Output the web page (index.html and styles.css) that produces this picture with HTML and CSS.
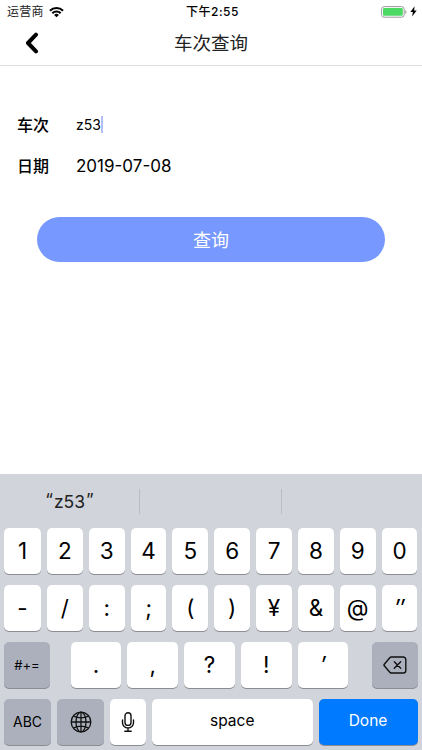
FILE: index.html
```html
<!DOCTYPE html>
<html lang="zh-CN">
<head>
    <meta charset="UTF-8">
    <meta name="viewport" content="width=device-width, initial-scale=1.0">
    <title>车次查询</title>
    <link rel="stylesheet" href="styles.css">
</head>
<body>
    <div class="status-bar">
        <div class="carrier">
            <span>运营商</span>
            <svg class="wifi" viewBox="0 0 14 11" width="15" height="12">
                <path d="M.9 4.3a8.6 8.6 0 0 1 12.2 0M3.1 6.6a5.4 5.4 0 0 1 7.8 0" fill="none" stroke="#000" stroke-width="1.9"/>
                <path d="M4.8 8.3a3 3 0 0 1 4.4 0L7 10.5z"/>
            </svg>
        </div>
        <span class="time">下午2:55</span>
        <div class="power">
            <svg viewBox="0 0 26 12" width="26" height="12">
                <rect x=".6" y=".6" width="22.6" height="10.6" rx="2.6" fill="#fff" stroke="#999" stroke-width="1"/>
                <rect x="2" y="2" width="19.8" height="7.8" rx="1.2" fill="#4cd964"/>
                <path d="M24.3 4v4c1.6-.6 1.6-3.4 0-4z" fill="#999"/>
            </svg>
            <svg class="bolt" viewBox="0 0 7 11" width="7" height="11">
                <path d="M4.6.3L.4 6h2.5L2.1 10.5 6.7 4.6H4.1z"/>
            </svg>
        </div>
    </div>

    <header class="nav-bar">
        <svg class="back" viewBox="0 0 14 22" width="14" height="22">
            <path d="M11 2.6L3 11l8 8.4" fill="none" stroke="#000" stroke-width="4" stroke-linecap="round" stroke-linejoin="round"/>
        </svg>
        <h1>车次查询</h1>
    </header>

    <main class="form">
        <div class="field">
            <span class="label">车次</span>
            <span class="value small">z53</span><span class="caret"></span>
        </div>
        <div class="field">
            <span class="label">日期</span>
            <span class="value">2019-07-08</span>
        </div>
        <button class="search">查询</button>
    </main>

    <div class="keyboard">
        <div class="suggestions">
            <span class="typed"><b>“</b>z53<b>”</b></span>
            <span></span>
            <span></span>
        </div>

        <div class="keys">
            <div class="key first">1</div>
            <div class="key">2</div>
            <div class="key">3</div>
            <div class="key">4</div>
            <div class="key">5</div>
            <div class="key">6</div>
            <div class="key">7</div>
            <div class="key">8</div>
            <div class="key">9</div>
            <div class="key">0</div>
        </div>

        <div class="keys">
            <div class="key first">-</div>
            <div class="key">/</div>
            <div class="key">:</div>
            <div class="key">;</div>
            <div class="key">(</div>
            <div class="key">)</div>
            <div class="key">¥</div>
            <div class="key">&amp;</div>
            <div class="key">@</div>
            <div class="key slanted">″</div>
        </div>

        <div class="keys marks">
            <div class="key dark symbols">#+=</div>
            <div class="mark-group">
                <div class="key">.</div>
                <div class="key">,</div>
                <div class="key">?</div>
                <div class="key">!</div>
                <div class="key slanted">′</div>
            </div>
            <div class="key dark delete">
                <svg viewBox="0 0 24 18" width="24" height="18" fill="none" stroke="#111" stroke-width="1.4" stroke-linejoin="round" stroke-linecap="round">
                    <path d="M8.2 1h12a2.6 2.6 0 0 1 2.6 2.6v10.8a2.6 2.6 0 0 1-2.6 2.6h-12q-.8 0-1.4-.7L1.3 9.8q-.7-.8 0-1.6L6.8 1.7q.6-.7 1.4-.7z"/>
                    <path d="M11.3 5.8l6.4 6.4M17.7 5.8l-6.4 6.4"/>
                </svg>
            </div>
        </div>

        <div class="keys bottom">
            <div class="key dark abc">ABC</div>
            <div class="key dark globe">
                <svg viewBox="0 0 22 22" width="22" height="22" fill="none" stroke="#111" stroke-width="1.3">
                    <circle cx="11" cy="11" r="9.8"/>
                    <ellipse cx="11" cy="11" rx="5" ry="9.8"/>
                    <path d="M11 1.3v19.4M1.3 11h19.4M3.5 5.2q7.5 3.4 15 0M3.5 16.8q7.5-3.4 15 0"/>
                </svg>
            </div>
            <div class="key mic">
                <svg viewBox="0 0 14 20" width="14" height="20" fill="none" stroke="#111" stroke-width="1.4" stroke-linecap="round">
                    <rect x="4" y=".8" width="6" height="12.6" rx="3"/>
                    <path d="M1.5 8v2.8a5.5 5.2 0 0 0 11 0V8M7 16v3M3.8 19.2h6.4"/>
                </svg>
            </div>
            <div class="key space">space</div>
            <div class="key done">Done</div>
        </div>
    </div>
</body>
</html>
```
FILE: styles.css
```css
* {
    box-sizing: border-box;
}

body {
    margin: 0;
    height: 750px;
    display: flex;
    flex-direction: column;
    overflow: hidden;
    background: #fff;
    color: #000;
    font-family: Inter, "Noto Sans CJK SC", sans-serif;
}

svg {
    display: block;
}

/* status bar */
.status-bar {
    height: 21px;
    padding: 1px 5px 0 7px;
    display: grid;
    grid-template-columns: 1fr auto 1fr;
    align-items: center;
    font-size: 12px;
    line-height: 20px;
}

.carrier {
    display: flex;
    align-items: center;
    gap: 5px;
    color: #222;
    letter-spacing: 0.3px;
}

.carrier span,
.time {
    padding-top: 1px;
}

.time {
    padding-left: 1px;
    font-weight: 500;
    letter-spacing: 0.5px;
}

.power {
    display: flex;
    align-items: center;
    justify-content: flex-end;
    gap: 3px;
}

/* title bar */
.nav-bar {
    height: 45px;
    padding: 0 25px;
    display: grid;
    grid-template-columns: 1fr auto 1fr;
    align-items: center;
    border-bottom: 1px solid #dcdcdc;
}

.nav-bar h1 {
    margin: 0;
    font-size: 18.5px;
    font-weight: 400;
    line-height: 44px;
    color: #222;
}

/* form */
.form {
    flex: 1;
    padding: 38px 37px 0 17px;
}

.field {
    height: 41px;
    display: flex;
    align-items: center;
}

.label {
    width: 59px;
    padding-bottom: 1px;
    font-size: 16px;
    font-weight: 500;
}

.value {
    font-size: 17px;
}

.value.small {
    font-size: 14px;
}

.caret {
    width: 2px;
    height: 17px;
    background: #b3bff8;
}

.search {
    display: block;
    width: 348px;
    height: 45px;
    margin: 30.5px 0 0 20px;
    padding: 0 0 1px;
    border: none;
    border-radius: 23px;
    background: #7799ff;
    color: #fff;
    font-family: inherit;
    font-size: 18px;
}

/* keyboard */
.keyboard {
    height: 276px;
    padding: 0 4.5px 0 4px;
    background: #d1d4da;
}

.suggestions {
    height: 54px;
    margin: 0 -4.5px 0 -4px;
    display: grid;
    grid-template-columns: 139px 142px 1fr;
    align-items: center;
    font-size: 17.5px;
    text-align: center;
    color: #222;
}

.suggestions span {
    height: 25px;
    line-height: 25px;
}

.suggestions span + span {
    border-left: 1px solid #b9bdc4;
}

.typed b {
    margin: 0 1px;
    font-weight: 400;
    vertical-align: 2px;
    line-height: 1;
}

.keys {
    height: 45.5px;
    margin-bottom: 11.5px;
    display: flex;
    gap: 6px;
}

.key {
    flex: 1;
    display: flex;
    align-items: center;
    justify-content: center;
    border-radius: 5px;
    background: #fff;
    box-shadow: 0 1px 0 #8b8d92;
    font-size: 22.5px;
}

.key.first {
    flex: 0 0 37px;
}

.key.slanted {
    font-style: italic;
}

.key.dark {
    background: #abb0bc;
}

.mark-group {
    width: 278px;
    margin: 0 17px 0 14.5px;
    display: flex;
    gap: 6px;
}

.key.symbols,
.key.delete {
    flex: 0 0 46px;
}

.key.symbols {
    font-size: 13px;
}

.key.abc,
.key.globe {
    flex: 0 0 47px;
}

.key.abc {
    font-size: 14px;
}

.key.mic {
    flex: 0 0 36px;
}

.key.space {
    padding-bottom: 3px;
    font-size: 15.5px;
}

.key.done {
    flex: 0 0 99px;
    padding-bottom: 3px;
    background: #007aff;
    color: #fff;
    font-size: 15.5px;
}
```
